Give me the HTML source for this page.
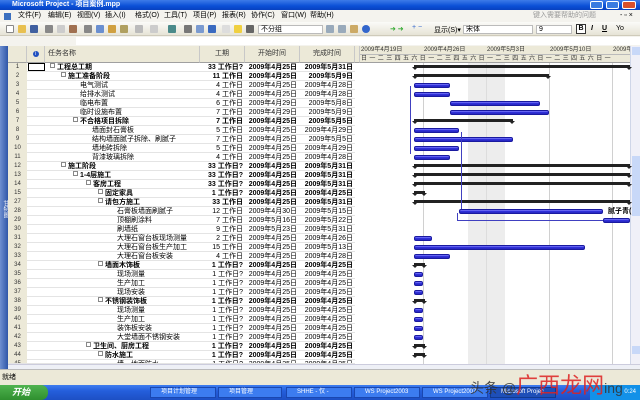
<!DOCTYPE html>
<html><head><meta charset="utf-8"><style>
*{margin:0;padding:0;box-sizing:border-box}
body{width:640px;height:400px;overflow:hidden;background:#fff;font-family:"Liberation Sans","Noto Sans CJK SC",sans-serif;font-size:7px;color:#000;position:relative}
.a{position:absolute;white-space:nowrap}
.title{left:0;top:0;width:640px;height:10px;background:linear-gradient(#3d7be8,#0a4fd6 60%,#0841c0);color:#fff;font-size:7px;line-height:10px;padding-left:12px;font-weight:bold}
.menu{left:0;top:10px;width:640px;height:12px;background:#f4f3ee;line-height:12px}
.tb{left:0;top:22px;width:640px;height:14px;background:linear-gradient(#fbfbf8,#e6e3d6);border-bottom:1px solid #cfcbbb}
.entry{left:0;top:36px;width:640px;height:10px;background:#f4f3ee}
.ico{position:absolute;top:3px;width:8px;height:8px;border-radius:1px}
.hdr{top:46px;height:17px;background:#ece9d8;border-bottom:1px solid #a0a0a0;border-right:1px solid #c8c8c8;line-height:16px;text-align:center;color:#333}
.r{position:absolute;left:8px;width:347px;height:9px;border-bottom:1px solid #e4e4e4;line-height:9px}
.r span{position:absolute;top:0}
.n{left:0;width:19px;text-align:center;background:#ece9d8;height:9px;color:#333;font-size:6px}
.d{right:112px;text-align:right}
.s{right:58px}
.f{right:2px}
.b{font-weight:bold}
.bx{position:absolute;top:2px;width:5px;height:5px;border:1px solid #888;background:#fff}
.bar{position:absolute;height:5px;background:linear-gradient(#8080ff,#2020d0 60%,#3030c0);border-radius:2px;border:1px solid #1a1aa0}
.sum{position:absolute;height:3px;background:#222}
.sum:before,.sum:after{content:"";position:absolute;top:2px;border:3px solid transparent;border-top:3px solid #222}
.sum:before{left:-2px}.sum:after{right:-2px}
.vl{position:absolute;top:63px;height:301px;width:1px;background:#d0d0d0}
</style></head><body>
<div class="a title">Microsoft Project - 项目案例.mpp</div>
<div class="a" style="left:590px;top:1px;width:48px;height:8px"><span class="a" style="left:0;width:13px;height:8px;background:#3a7be0;border:1px solid #fff;border-radius:2px"></span><span class="a" style="left:16px;width:13px;height:8px;background:#3a7be0;border:1px solid #fff;border-radius:2px"></span><span class="a" style="left:32px;width:14px;height:8px;background:#d9502c;border:1px solid #fff;border-radius:2px"></span></div>
<div class="a menu"><span class="a" style="left:4px;top:3px;width:7px;height:7px;background:#3b6fbf"></span>
<span class="a" style="left:18px">文件(F)</span><span class="a" style="left:48px">编辑(E)</span><span class="a" style="left:77px">视图(V)</span><span class="a" style="left:105px">插入(I)</span><span class="a" style="left:135px">格式(O)</span><span class="a" style="left:164px">工具(T)</span><span class="a" style="left:193px">项目(P)</span><span class="a" style="left:222px">报表(R)</span><span class="a" style="left:251px">协作(C)</span><span class="a" style="left:281px">窗口(W)</span><span class="a" style="left:310px">帮助(H)</span>
<span class="a" style="left:533px;color:#999">键入需要帮助的问题</span><span class="a" style="left:620px">- ▫ ×</span></div>
<div class="a tb">
<span class="ico" style="left:6px;background:#fff;border:1px solid #888"></span><span class="ico" style="left:18px;background:#e8c050"></span><span class="ico" style="left:30px;background:#4060a0"></span><span class="ico" style="left:45px;background:#888"></span><span class="ico" style="left:57px;background:#ccc"></span><span class="ico" style="left:69px;background:#a07050"></span><span class="ico" style="left:84px;background:#888"></span><span class="ico" style="left:96px;background:#6a8fd0"></span><span class="ico" style="left:108px;background:#d0a040"></span><span class="ico" style="left:120px;background:#b0a060"></span><span class="ico" style="left:135px;background:#bbb"></span><span class="ico" style="left:150px;background:#ccc"></span><span class="ico" style="left:168px;background:#4a8a8a"></span><span class="ico" style="left:184px;background:#777"></span><span class="ico" style="left:196px;background:#7a9ad0"></span><span class="ico" style="left:208px;background:#3a6ac0"></span><span class="ico" style="left:222px;background:#ddd"></span><span class="ico" style="left:234px;background:#f0d040"></span><span class="ico" style="left:246px;background:#666"></span>
<span class="a" style="left:258px;top:3px;width:65px;height:9px;background:#fff;border:1px solid #bbb;line-height:7px;padding-left:2px">不分组</span>
<span class="ico" style="left:326px;background:#9ab"></span><span class="ico" style="left:338px;background:#9ab"></span><span class="ico" style="left:350px;background:#ca6"></span><span class="ico" style="left:362px;background:#36c;border-radius:4px"></span>
<span class="a" style="left:390px;top:3px;color:#3a3">➜ ➜</span><span class="a" style="left:412px;top:2px;color:#36c">+ −</span><span class="a" style="left:434px;top:3px">显示(S)▾</span>
<span class="a" style="left:463px;top:3px;width:70px;height:9px;background:#fff;border:1px solid #bbb;line-height:7px;padding-left:2px">宋体</span>
<span class="a" style="left:536px;top:3px;width:36px;height:9px;background:#fff;border:1px solid #bbb;line-height:7px;padding-left:2px">9</span>
<span class="a" style="left:576px;top:2px;width:10px;height:10px;border:1px solid #333;background:#fff;font-weight:bold;text-align:center;line-height:8px">B</span><span class="a" style="left:591px;top:3px;font-style:italic;font-weight:bold">I</span><span class="a" style="left:602px;top:3px;text-decoration:underline;font-weight:bold">U</span><span class="a" style="left:616px;top:3px">Yo</span></div>
<div class="a entry"><span class="a" style="left:76px;top:1px;width:564px;height:8px;background:#fff"></span></div>
<!-- left view bar -->
<div class="a" style="left:0;top:46px;width:8px;height:323px;background:linear-gradient(90deg,#6e8fd0,#2f56a8);"></div>
<div class="a" style="left:1px;top:200px;color:#fff;font-size:6px;writing-mode:vertical-rl">甘特图</div>
<!-- headers -->
<div class="a hdr" style="left:8px;width:19px"></div>
<div class="a hdr" style="left:27px;width:18px"><span style="display:inline-block;width:6px;height:6px;border-radius:3px;background:#2050c0;color:#fff;font-size:5px;line-height:6px">i</span></div>
<div class="a hdr" style="left:45px;width:155px;text-align:left;padding-left:3px">任务名称</div>
<div class="a hdr" style="left:200px;width:45px">工期</div>
<div class="a hdr" style="left:245px;width:55px">开始时间</div>
<div class="a hdr" style="left:300px;width:55px">完成时间</div>
<div class="a hdr" style="left:355px;width:5px"></div>
<div class="a" style="left:360px;top:46px;width:270px;height:17px;background:#ece9d8;border-bottom:1px solid #a0a0a0;font-size:6px;line-height:8px;color:#333;overflow:hidden">
<span class="a" style="left:1px">2009年4月19日</span><span class="a" style="left:64px">2009年4月26日</span><span class="a" style="left:127px">2009年5月3日</span><span class="a" style="left:190px">2009年5月10日</span><span class="a" style="left:253px">2009年</span>
<span class="a" style="left:0;top:8px;width:270px;border-top:1px solid #bbb;letter-spacing:2.4px;padding-left:1px">日一二三四五六日一二三四五六日一二三四五六日一二三四五六日一</span></div>
<div class="a" style="left:630px;top:46px;width:10px;height:318px;background:#f0f0f8;border-left:1px solid #cfd6e8"><span class="a" style="left:1px;top:1px;width:8px;height:8px;background:#c8d8f8"></span><span class="a" style="left:1px;top:110px;width:8px;height:60px;background:#c8d8f8"></span><span class="a" style="left:1px;top:300px;width:8px;height:8px;background:#c8d8f8"></span></div>
<!-- gantt background -->
<div class="a" style="left:468px;top:63px;width:37px;height:301px;background:#ededed"></div>
<div class="a" style="left:486px;top:63px;width:1px;height:301px;background:#ddd"></div>
<div class="vl" style="left:423px"></div><div class="vl" style="left:549px"></div><div class="vl" style="left:612px"></div>

<div class="r" style="top:63px"><span class="n">1</span><span class="a" style="left:20px;top:0;width:17px;height:8px;border:1px solid #000"></span><span class="bx" style="left:42px"></span><span class="b" style="left:49px">工程总工期</span><span class="d b">33 工作日?</span><span class="s b">2009年4月25日</span><span class="f b">2009年5月31日</span></div>
<div class="r" style="top:72px"><span class="n">2</span><span class="bx" style="left:53px"></span><span class="b" style="left:60px">施工准备阶段</span><span class="d b">11 工作日</span><span class="s b">2009年4月25日</span><span class="f b">2009年5月9日</span></div>
<div class="r" style="top:81px"><span class="n">3</span><span style="left:72px">电气测试</span><span class="d">4 工作日</span><span class="s">2009年4月25日</span><span class="f">2009年4月28日</span></div>
<div class="r" style="top:90px"><span class="n">4</span><span style="left:72px">给排水测试</span><span class="d">4 工作日</span><span class="s">2009年4月25日</span><span class="f">2009年4月28日</span></div>
<div class="r" style="top:99px"><span class="n">5</span><span style="left:72px">临电布置</span><span class="d">6 工作日</span><span class="s">2009年4月29日</span><span class="f">2009年5月8日</span></div>
<div class="r" style="top:108px"><span class="n">6</span><span style="left:72px">临时设施布置</span><span class="d">7 工作日</span><span class="s">2009年4月29日</span><span class="f">2009年5月9日</span></div>
<div class="r" style="top:117px"><span class="n">7</span><span class="bx" style="left:65px"></span><span class="b" style="left:72px">不合格项目拆除</span><span class="d b">7 工作日</span><span class="s b">2009年4月25日</span><span class="f b">2009年5月5日</span></div>
<div class="r" style="top:126px"><span class="n">8</span><span style="left:84px">墙面封石膏板</span><span class="d">5 工作日</span><span class="s">2009年4月25日</span><span class="f">2009年4月29日</span></div>
<div class="r" style="top:135px"><span class="n">9</span><span style="left:84px">结构墙面腻子拆除、刷腻子</span><span class="d">7 工作日</span><span class="s">2009年4月25日</span><span class="f">2009年5月5日</span></div>
<div class="r" style="top:144px"><span class="n">10</span><span style="left:84px">墙地砖拆除</span><span class="d">5 工作日</span><span class="s">2009年4月25日</span><span class="f">2009年4月29日</span></div>
<div class="r" style="top:153px"><span class="n">11</span><span style="left:84px">背漆玻璃拆除</span><span class="d">4 工作日</span><span class="s">2009年4月25日</span><span class="f">2009年4月28日</span></div>
<div class="r" style="top:162px"><span class="n">12</span><span class="bx" style="left:53px"></span><span class="b" style="left:60px">施工阶段</span><span class="d b">33 工作日?</span><span class="s b">2009年4月25日</span><span class="f b">2009年5月31日</span></div>
<div class="r" style="top:171px"><span class="n">13</span><span class="bx" style="left:65px"></span><span class="b" style="left:72px">1-4层施工</span><span class="d b">33 工作日?</span><span class="s b">2009年4月25日</span><span class="f b">2009年5月31日</span></div>
<div class="r" style="top:180px"><span class="n">14</span><span class="bx" style="left:78px"></span><span class="b" style="left:85px">客房工程</span><span class="d b">33 工作日?</span><span class="s b">2009年4月25日</span><span class="f b">2009年5月31日</span></div>
<div class="r" style="top:189px"><span class="n">15</span><span class="bx" style="left:90px"></span><span class="b" style="left:97px">固定家具</span><span class="d b">1 工作日?</span><span class="s b">2009年4月25日</span><span class="f b">2009年4月25日</span></div>
<div class="r" style="top:198px"><span class="n">27</span><span class="bx" style="left:90px"></span><span class="b" style="left:97px">请包方施工</span><span class="d b">33 工作日</span><span class="s b">2009年4月25日</span><span class="f b">2009年5月31日</span></div>
<div class="r" style="top:207px"><span class="n">28</span><span style="left:109px">石膏板墙面刷腻子</span><span class="d">12 工作日</span><span class="s">2009年4月30日</span><span class="f">2009年5月15日</span></div>
<div class="r" style="top:216px"><span class="n">29</span><span style="left:109px">顶棚刷涂料</span><span class="d">7 工作日</span><span class="s">2009年5月16日</span><span class="f">2009年5月22日</span></div>
<div class="r" style="top:225px"><span class="n">30</span><span style="left:109px">刷墙纸</span><span class="d">9 工作日</span><span class="s">2009年5月23日</span><span class="f">2009年5月31日</span></div>
<div class="r" style="top:234px"><span class="n">31</span><span style="left:109px">大理石窗台板现场测量</span><span class="d">2 工作日</span><span class="s">2009年4月25日</span><span class="f">2009年4月26日</span></div>
<div class="r" style="top:243px"><span class="n">32</span><span style="left:109px">大理石窗台板生产加工</span><span class="d">15 工作日</span><span class="s">2009年4月25日</span><span class="f">2009年5月13日</span></div>
<div class="r" style="top:252px"><span class="n">33</span><span style="left:109px">大理石窗台板安装</span><span class="d">4 工作日</span><span class="s">2009年4月25日</span><span class="f">2009年4月28日</span></div>
<div class="r" style="top:261px"><span class="n">34</span><span class="bx" style="left:90px"></span><span class="b" style="left:97px">墙面木饰板</span><span class="d b">1 工作日?</span><span class="s b">2009年4月25日</span><span class="f b">2009年4月25日</span></div>
<div class="r" style="top:270px"><span class="n">35</span><span style="left:109px">现场测量</span><span class="d">1 工作日?</span><span class="s">2009年4月25日</span><span class="f">2009年4月25日</span></div>
<div class="r" style="top:279px"><span class="n">36</span><span style="left:109px">生产加工</span><span class="d">1 工作日?</span><span class="s">2009年4月25日</span><span class="f">2009年4月25日</span></div>
<div class="r" style="top:288px"><span class="n">37</span><span style="left:109px">现场安装</span><span class="d">1 工作日?</span><span class="s">2009年4月25日</span><span class="f">2009年4月25日</span></div>
<div class="r" style="top:297px"><span class="n">38</span><span class="bx" style="left:90px"></span><span class="b" style="left:97px">不锈钢装饰板</span><span class="d b">1 工作日?</span><span class="s b">2009年4月25日</span><span class="f b">2009年4月25日</span></div>
<div class="r" style="top:306px"><span class="n">39</span><span style="left:109px">现场测量</span><span class="d">1 工作日?</span><span class="s">2009年4月25日</span><span class="f">2009年4月25日</span></div>
<div class="r" style="top:315px"><span class="n">40</span><span style="left:109px">生产加工</span><span class="d">1 工作日?</span><span class="s">2009年4月25日</span><span class="f">2009年4月25日</span></div>
<div class="r" style="top:324px"><span class="n">41</span><span style="left:109px">装饰板安装</span><span class="d">1 工作日?</span><span class="s">2009年4月25日</span><span class="f">2009年4月25日</span></div>
<div class="r" style="top:333px"><span class="n">42</span><span style="left:109px">大堂墙面不锈钢安装</span><span class="d">1 工作日?</span><span class="s">2009年4月25日</span><span class="f">2009年4月25日</span></div>
<div class="r" style="top:342px"><span class="n">43</span><span class="bx" style="left:78px"></span><span class="b" style="left:85px">卫生间、厨房工程</span><span class="d b">1 工作日?</span><span class="s b">2009年4月25日</span><span class="f b">2009年4月25日</span></div>
<div class="r" style="top:351px"><span class="n">44</span><span class="bx" style="left:90px"></span><span class="b" style="left:97px">防水施工</span><span class="d b">1 工作日?</span><span class="s b">2009年4月25日</span><span class="f b">2009年4月25日</span></div>
<div class="r" style="top:360px;height:4px;overflow:hidden"><span class="n">45</span><span style="left:109px">墙、地面防水</span><span class="d">1 工作日?</span><span class="s">2009年4月25日</span><span class="f">2009年4月25日</span></div>

<!-- gantt bars -->
<div class="sum" style="left:414px;width:216px;top:65px"></div>
<div class="sum" style="left:414px;width:135px;top:74px"></div>
<div class="bar" style="left:414px;width:36px;top:83px"></div>
<div class="bar" style="left:414px;width:36px;top:92px"></div>
<div class="bar" style="left:450px;width:90px;top:101px"></div>
<div class="bar" style="left:450px;width:99px;top:110px"></div>
<div class="sum" style="left:414px;width:99px;top:119px"></div>
<div class="bar" style="left:414px;width:45px;top:128px"></div>
<div class="bar" style="left:414px;width:99px;top:137px"></div>
<div class="bar" style="left:414px;width:45px;top:146px"></div>
<div class="bar" style="left:414px;width:36px;top:155px"></div>
<div class="sum" style="left:414px;width:216px;top:164px"></div>
<div class="sum" style="left:414px;width:216px;top:173px"></div>
<div class="sum" style="left:414px;width:216px;top:182px"></div>
<div class="sum" style="left:414px;width:11px;top:191px"></div>
<div class="sum" style="left:414px;width:216px;top:200px"></div>
<div class="bar" style="left:459px;width:144px;top:209px"></div>
<span class="a b" style="left:608px;top:207px;line-height:9px">腻子青(</span>
<div class="bar" style="left:603px;width:27px;top:218px"></div>
<div class="a" style="left:410px;top:86px;width:1px;height:68px;background:#4040c0"></div>
<div class="a" style="left:461px;top:132px;width:1px;height:77px;background:#4040c0"></div>
<div class="a" style="left:457px;top:213px;width:1px;height:7px;background:#4040c0"></div>
<div class="a" style="left:457px;top:220px;width:146px;height:1px;background:#4040c0"></div>
<div class="bar" style="left:414px;width:18px;top:236px"></div>
<div class="bar" style="left:414px;width:171px;top:245px"></div>
<div class="bar" style="left:414px;width:36px;top:254px"></div>
<div class="sum" style="left:414px;width:11px;top:263px"></div>
<div class="bar" style="left:414px;width:9px;top:272px"></div>
<div class="bar" style="left:414px;width:9px;top:281px"></div>
<div class="bar" style="left:414px;width:9px;top:290px"></div>
<div class="sum" style="left:414px;width:11px;top:299px"></div>
<div class="bar" style="left:414px;width:9px;top:308px"></div>
<div class="bar" style="left:414px;width:9px;top:317px"></div>
<div class="bar" style="left:414px;width:9px;top:326px"></div>
<div class="bar" style="left:414px;width:9px;top:335px"></div>
<div class="sum" style="left:414px;width:11px;top:344px"></div>
<div class="sum" style="left:414px;width:11px;top:353px"></div>

<!-- scrollbars -->
<div class="a" style="left:8px;top:364px;width:632px;height:5px;background:#eef0f6;border-top:1px solid #ccd"></div>
<!-- status -->
<div class="a" style="left:0;top:369px;width:640px;height:16px;background:#ece9d8;border-top:1px solid #bbb;line-height:15px;padding-left:2px">就绪</div>
<!-- taskbar -->
<div class="a" style="left:0;top:385px;width:640px;height:15px;background:linear-gradient(#3f7ef0,#245edb 40%,#1d4fc4);"></div>
<div class="a" style="left:0;top:385px;width:48px;height:15px;background:linear-gradient(#4fb34f,#2f8f2f);border-radius:0 7px 7px 0;color:#fff;font-style:italic;font-weight:bold;font-size:9px;line-height:15px;padding-left:12px">开始</div>
<div class="a" style="left:150px;top:387px;width:66px;height:11px;background:#3c7cf0;border:1px solid #1a47b0;color:#fff;font-size:6px;line-height:9px;padding-left:10px">项目计划管理</div>
<div class="a" style="left:218px;top:387px;width:64px;height:11px;background:#3c7cf0;border:1px solid #1a47b0;color:#fff;font-size:6px;line-height:9px;padding-left:10px">项目管理</div>
<div class="a" style="left:286px;top:387px;width:66px;height:11px;background:#3c7cf0;border:1px solid #1a47b0;color:#fff;font-size:6px;line-height:9px;padding-left:10px">SHHE - 仅 -</div>
<div class="a" style="left:354px;top:387px;width:66px;height:11px;background:#3c7cf0;border:1px solid #1a47b0;color:#fff;font-size:6px;line-height:9px;padding-left:10px">WS Project2003</div>
<div class="a" style="left:422px;top:387px;width:66px;height:11px;background:#3c7cf0;border:1px solid #1a47b0;color:#fff;font-size:6px;line-height:9px;padding-left:10px">WS Project2007</div>
<div class="a" style="left:490px;top:387px;width:66px;height:11px;background:#1e4fb8;border:1px solid #123a90;color:#fff;font-size:6px;line-height:9px;padding-left:10px">Microsoft Projec</div>
<div class="a" style="left:590px;top:385px;width:50px;height:15px;background:#1291e8;color:#fff;font-size:6px;line-height:15px;text-align:right;padding-right:4px">0:24</div>
<div class="a" style="left:470px;top:368px;font-size:14px;color:#333;opacity:.85">头条 @<span style="color:#d22;font-size:22px">广西龙网</span>ing</div>
</body></html>
